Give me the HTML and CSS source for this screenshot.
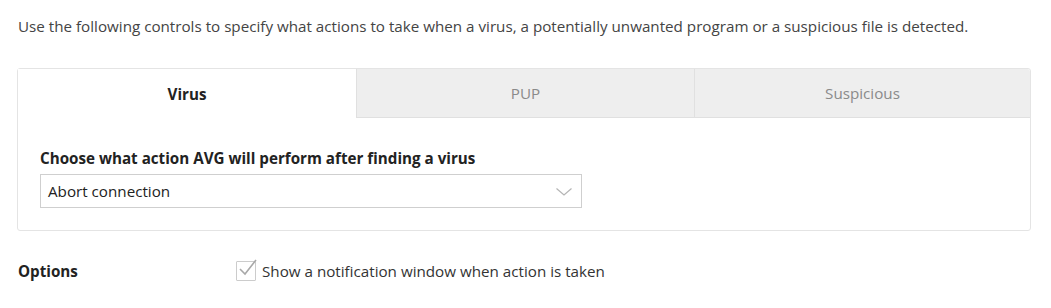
FILE: index.html
```html
<!DOCTYPE html>
<html>
<head>
<meta charset="utf-8">
<link rel="stylesheet" href="styles.css">
</head>
<body>
<p class="intro">Use the following controls to specify what actions to take when a virus, a potentially unwanted program or a suspicious file is detected.</p>
<div class="panel">
  <div class="tabs">
    <div class="tab active">Virus</div>
    <div class="tab">PUP</div>
    <div class="tab">Suspicious</div>
  </div>
  <div class="panel-body">
    <div class="field-label">Choose what action AVG will perform after finding a virus</div>
    <div class="select">
      <span>Abort connection</span>
      <svg class="chevron" width="16" height="8" viewBox="0 0 16 8"><path d="M0.5 0.5 L8 7 L15.5 0.5" fill="none" stroke="#b5b5b5" stroke-width="1.2"/></svg>
    </div>
  </div>
</div>
<div class="options">
  <div class="options-title">Options</div>
  <label class="check">
    <span class="box"><svg width="22" height="22" viewBox="0 0 22 22"><path d="M4 11 L9 16 L20 2" fill="none" stroke="#a8a8a8" stroke-width="1.6"/></svg></span>
    <span>Show a notification window when action is taken</span>
  </label>
</div>
</body>
</html>
```
FILE: styles.css
```css
body {
  margin: 0;
  font-family: "Open Sans", "DejaVu Sans", sans-serif;
  font-size: 15.2px;
  line-height: 20px;
  color: #333;
  background: #fff;
}
.intro {
  margin: 0;
  padding: 16px 0 0 18px;
  color: #444;
}
.panel {
  margin: 32px 0 0 17px;
  width: 1012px;
  border: 1px solid #e4e4e4;
  border-radius: 3px;
}
.tabs {
  display: grid;
  grid-template-columns: 338px 338px 1fr;
  height: 49px;
}
.tab {
  display: flex;
  align-items: center;
  justify-content: center;
  background: #eeeeee;
  color: #8a8a8a;
  border-left: 1px solid #e0e0e0;
  border-bottom: 1px solid #e0e0e0;
}
.tab:last-child {
  border-top-right-radius: 3px;
}
.tab.active {
  background: #fff;
  color: #222;
  font-weight: bold;
  border-left: none;
  border-bottom: none;
}
.panel-body {
  padding: 30px 22px 22px;
}
.field-label {
  font-weight: bold;
  color: #222;
  margin-bottom: 6px;
}
.select {
  height: 32px;
  border: 1px solid #cfcfcf;
  display: flex;
  align-items: center;
  justify-content: space-between;
  padding: 0 9px 0 7px;
  box-sizing: content-box;
  width: 524px;
  color: #222;
}
.chevron {
  margin-top: 1px;
}
.options {
  display: flex;
  align-items: center;
  margin-top: 30px;
  padding-left: 18px;
}
.options-title {
  width: 218px;
  font-weight: bold;
  color: #222;
}
.check {
  display: flex;
  align-items: center;
  gap: 6px;
  color: #333;
}
.box {
  position: relative;
  width: 18px;
  height: 18px;
  border: 1px solid #cccccc;
  border-radius: 1px;
}
.box svg {
  position: absolute;
  left: -1px;
  top: -4px;
}
```
